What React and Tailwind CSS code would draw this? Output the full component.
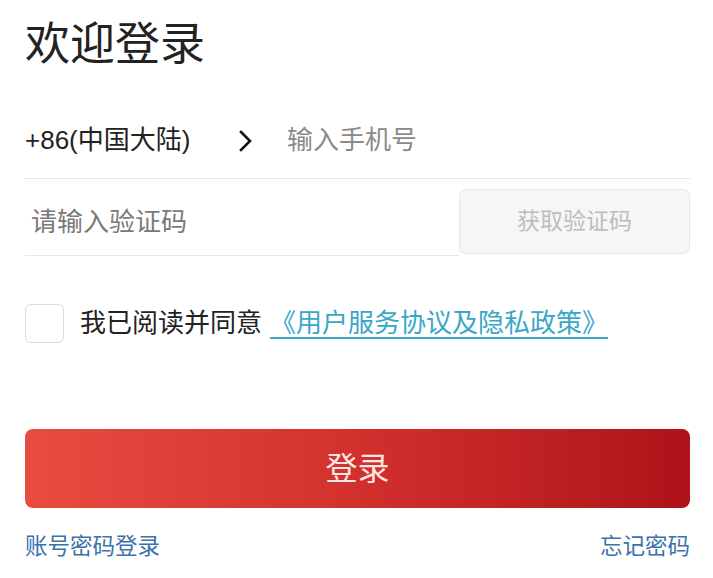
export default function App() {
  return (
    <div
      className="w-[713px] h-[578px] bg-white overflow-hidden pl-[25px] pr-[23px]"
      style={{ fontFamily: '"Liberation Sans", "Noto Sans CJK SC", sans-serif' }}
    >
      <h1 className="pt-[17px] text-[45px] leading-[56px] text-[#222]">欢迎登录</h1>

      <div className="mt-[30px] h-[76px] flex items-center border-b border-[#e6e6e6]">
        <span className="text-[26px] text-[#222] w-[205px]">+86(中国大陆)</span>
        <svg width="18" height="24" viewBox="0 0 18 24" className="ml-[6px]">
          <path d="M5 3 L14 12 L5 21" fill="none" stroke="#111" strokeWidth="2.6" strokeLinecap="square" />
        </svg>
        <span className="ml-[33px] text-[26px] text-[#8a8a8a]">输入手机号</span>
      </div>

      <div className="flex h-[77px]">
        <div className="flex-1 flex items-center border-b border-[#e9e9e9] pl-[6px] pt-[10px]">
          <span className="text-[26px] text-[#7a7a7a]">请输入验证码</span>
        </div>
        <div className="w-[231px] pt-[10px]">
          <div className="h-[65px] rounded-[7px] border border-[#e8e8e8] bg-[#f6f6f6] flex items-center justify-center text-[23px] text-[#bdbdbd]">
            获取验证码
          </div>
        </div>
      </div>

      <div className="mt-[47px] flex items-center h-[40px]">
        <div className="w-[39px] h-[39px] rounded-[6px] border border-[#dcdcdc] bg-white" />
        <span className="ml-[16px] text-[26px] text-[#222]">我已阅读并同意</span>
        <span className="ml-[8px] text-[26px] text-[#3aa6c8] underline decoration-[2px] underline-offset-[5px]">
          《用户服务协议及隐私政策》
        </span>
      </div>

      <div className="mt-[86px] h-[79px] rounded-[8px] bg-gradient-to-r from-[#e84c40] via-[#d2302d] to-[#ae1219] flex items-center justify-center">
        <span className="text-[32px] text-[#fbe6e2]">登录</span>
      </div>

      <div className="mt-[22px] flex justify-between items-center">
        <span className="text-[22.5px] text-[#3b72aa]">账号密码登录</span>
        <span className="text-[22.5px] text-[#3b72aa]">忘记密码</span>
      </div>
    </div>
  );
}
